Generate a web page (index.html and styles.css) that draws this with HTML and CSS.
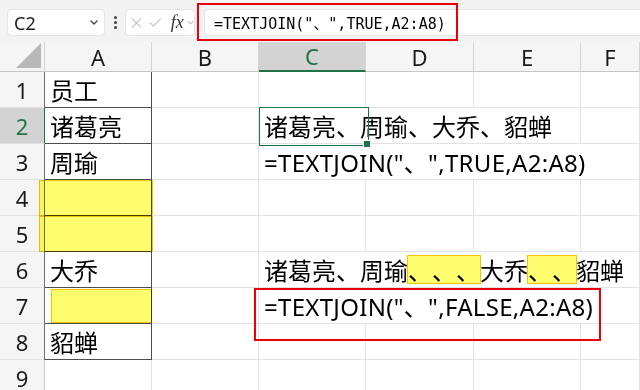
FILE: index.html
```html
<!DOCTYPE html>
<html lang="zh-CN">
<head>
  <meta charset="UTF-8" />
  <title>TEXTJOIN</title>
  <link rel="stylesheet" href="styles.css">
</head>
<body>
  <div class="topbar">
    <div class="name-box">
      <span>C2</span>
      <svg width="10" height="7" viewBox="0 0 10 7"><path d="M1.5 1.5l3.5 3.5 3.5-3.5" fill="none" stroke="#444" stroke-width="1.3"/></svg>
    </div>
    <div class="grip"><i></i><i></i><i></i></div>
    <div class="fx-box">
      <svg width="12" height="12" viewBox="0 0 12 12"><path d="M1 1l10 10M11 1L1 11" stroke="#c4c4c4" stroke-width="1.2"/></svg>
      <svg width="14" height="11" viewBox="0 0 14 11"><path d="M1 5.5l4 4L13 1" fill="none" stroke="#c4c4c4" stroke-width="1.2"/></svg>
      <span class="fx">fx</span>
      <svg width="8" height="5" viewBox="0 0 8 5"><path d="M1 1l3 3 3-3" fill="none" stroke="#bbb" stroke-width="1.1"/></svg>
    </div>
    <div class="formula">=TEXTJOIN("、",TRUE,A2:A8)</div>
    <div class="callout callout-bar"></div>
  </div>

  <div class="sheet">
    <div class="corner"></div>
    <div class="ch">A</div>
    <div class="ch">B</div>
    <div class="ch sel">C</div>
    <div class="ch">D</div>
    <div class="ch">E</div>
    <div class="ch">F</div>

    <div class="rh">1</div>
    <div class="c a">员工</div>
    <div class="c"></div><div class="c"></div><div class="c"></div><div class="c"></div><div class="c"></div>

    <div class="rh sel">2</div>
    <div class="c a a-sel">诸葛亮</div>
    <div class="c"></div>
    <div class="c span3 active">诸葛亮、周瑜、大乔、貂蝉</div>
    <div class="c"></div>

    <div class="rh">3</div>
    <div class="c a">周瑜</div>
    <div class="c"></div>
    <div class="c span4 fn">=TEXTJOIN("、",TRUE,A2:A8)</div>

    <div class="rh">4</div>
    <div class="c a hl"></div>
    <div class="c"></div><div class="c"></div><div class="c"></div><div class="c"></div><div class="c"></div>

    <div class="rh">5</div>
    <div class="c a hl"></div>
    <div class="c"></div><div class="c"></div><div class="c"></div><div class="c"></div><div class="c"></div>

    <div class="rh">6</div>
    <div class="c a">大乔</div>
    <div class="c"></div>
    <div class="c span4">诸葛亮、周瑜<span class="mark">、、、</span>大乔<span class="mark">、、</span>貂蝉</div>

    <div class="rh">7</div>
    <div class="c a hl-inset"></div>
    <div class="c"></div>
    <div class="c span4 fn">=TEXTJOIN("、",FALSE,A2:A8)</div>

    <div class="rh">8</div>
    <div class="c a">貂蝉</div>
    <div class="c"></div><div class="c"></div><div class="c"></div><div class="c"></div><div class="c"></div>

    <div class="rh">9</div>
    <div class="c"></div><div class="c"></div><div class="c"></div><div class="c"></div><div class="c"></div><div class="c"></div>

    <div class="callout callout-cells"></div>
  </div>
</body>
</html>
```

FILE: styles.css
```css
* {
  box-sizing: border-box;
}
body {
  margin: 0;
  width: 640px;
  height: 390px;
  overflow: hidden;
  background: #fff;
  font-family: "Noto Sans", "Noto Sans CJK SC", sans-serif;
  color: #111;
  text-spacing-trim: space-all;
}

/* formula bar */
.topbar {
  position: relative;
  display: flex;
  align-items: center;
  height: 42px;
  padding: 3px 0 0 7px;
  background: #f3f3f3;
}
.name-box {
  display: flex;
  align-items: center;
  justify-content: space-between;
  width: 98px;
  height: 27px;
  padding: 0 5px 0 6px;
  background: #fff;
  border: 1px solid #e4e4e4;
  border-radius: 4px;
  font-size: 18px;
  color: #222;
}
.grip {
  display: flex;
  flex-direction: column;
  align-items: center;
  gap: 2px;
  width: 20px;
}
.grip i {
  width: 3px;
  height: 3px;
  border-radius: 50%;
  background: #444;
}
.fx-box {
  display: flex;
  align-items: center;
  gap: 7px;
  width: 70px;
  height: 27px;
  padding-left: 5px;
  background: #fff;
  border: 1px solid #e4e4e4;
  border-radius: 4px;
}
.fx {
  margin-left: 2px;
  margin-right: -4px;
  font-family: "Liberation Serif", serif;
  font-style: italic;
  font-size: 18px;
  color: #333;
}
.formula {
  flex: 1;
  display: flex;
  align-items: center;
  height: 27px;
  margin-left: 9px;
  padding-left: 9px;
  background: #fff;
  border: 1px solid #e4e4e4;
  border-right: 0;
  border-radius: 4px 0 0 4px;
  font-family: "DejaVu Sans Mono", "Noto Sans CJK SC", monospace;
  font-size: 15px;
  color: #000;
}
.callout {
  position: absolute;
  border: 2px solid #e8000b;
  pointer-events: none;
}
.callout-bar {
  left: 197px;
  top: 3px;
  width: 261px;
  height: 38px;
}

/* grid */
.sheet {
  position: relative;
  display: grid;
  grid-template-columns: 45px 107px 107px 107px 108px 107px 1fr;
  grid-template-rows: 30px repeat(9, 36px);
}
.corner {
  position: relative;
  background: #f5f5f5;
  border-right: 1px solid #d4d4d4;
  border-bottom: 1px solid #c6c6c6;
}
.corner::after {
  content: "";
  position: absolute;
  right: 3px;
  bottom: 3px;
  width: 25px;
  height: 25px;
  background: #b8b8b8;
  clip-path: polygon(100% 0, 100% 100%, 0 100%);
}
.ch {
  display: flex;
  align-items: center;
  justify-content: center;
  background: #f5f5f5;
  border-right: 1px solid #d4d4d4;
  border-bottom: 1px solid #c6c6c6;
  font-size: 22px;
  color: #1a1a1a;
}
.ch.sel {
  background: #d3d3d3;
  color: #217346;
  border-bottom: 2px solid #217346;
}
.rh {
  display: flex;
  align-items: center;
  justify-content: center;
  background: #f5f5f5;
  border-right: 1px solid #c6c6c6;
  border-bottom: 1px solid #e2e2e2;
  font-size: 22px;
  color: #1a1a1a;
}
.rh.sel {
  background: #d3d3d3;
  color: #217346;
  border-right: 1px solid #217346;
}
.c {
  position: relative;
  display: flex;
  align-items: center;
  padding-left: 5px;
  border-right: 1px solid #e2e2e2;
  border-bottom: 1px solid #e2e2e2;
  font-size: 24px;
  white-space: nowrap;
  color: #000;
}
.c.a {
  border-right: 1px solid #4d4d4d;
  border-bottom: 1px solid #4d4d4d;
  box-shadow: -1px 0 0 #6e6e6e;
}
.c.a-sel {
  box-shadow: none;
}
.span3 {
  grid-column: span 3;
}
.span4 {
  grid-column: span 4;
}
.fn {
  letter-spacing: 0.3px;
}
.active::after {
  content: "";
  position: absolute;
  left: 0;
  top: -1px;
  width: 108px;
  height: 37px;
  border: 1px solid #217346;
}
.active::before {
  content: "";
  position: absolute;
  left: 104px;
  top: 32px;
  width: 6px;
  height: 6px;
  background: #217346;
  border: 1px solid #fff;
  z-index: 1;
}

/* yellow marks */
.hl::after,
.hl-inset::after {
  content: "";
  position: absolute;
  top: 0;
  bottom: -1px;
  left: -6px;
  right: -2px;
  background: #ffff6e;
  border: 1px solid #f0c400;
  mix-blend-mode: multiply;
}
.hl-inset::after {
  left: 6px;
  right: -1px;
  top: 1px;
  bottom: 0;
}
.mark {
  display: inline-flex;
  align-items: center;
  height: 29px;
  margin: 0 -1px;
  background: #ffff6e;
  border: 1px solid #f0c400;
}
.callout-cells {
  left: 254px;
  top: 246px;
  width: 347px;
  height: 53px;
}
```
